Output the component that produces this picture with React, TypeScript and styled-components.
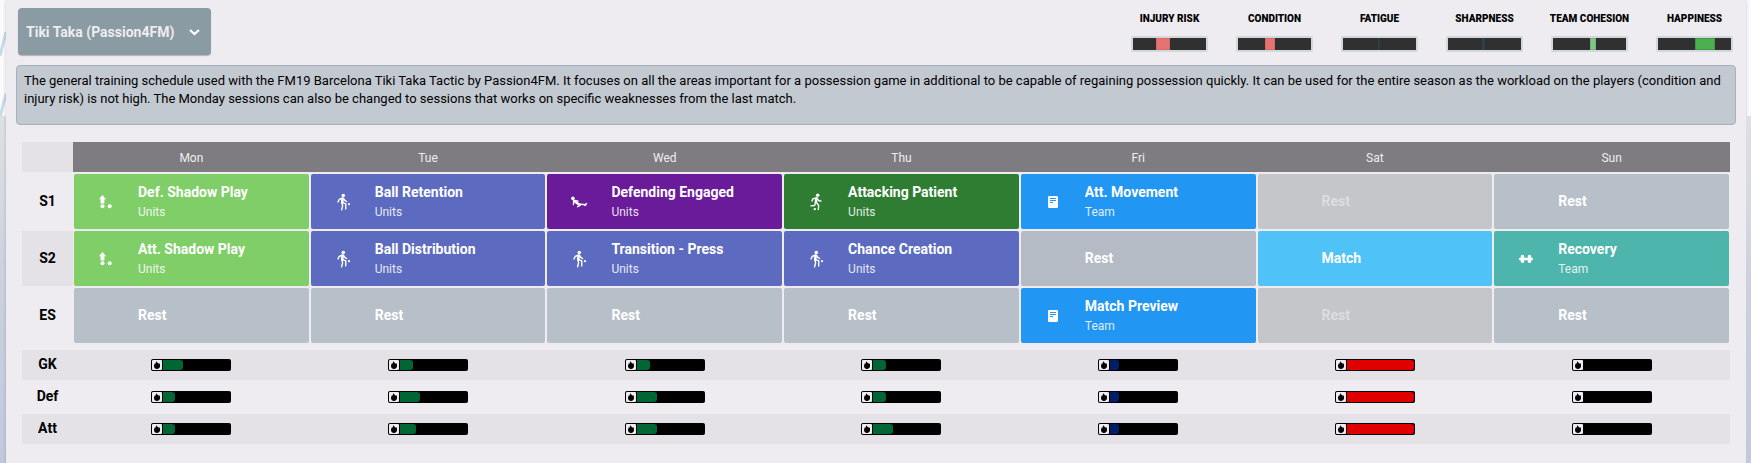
import React from 'react';
import styled, { createGlobalStyle } from 'styled-components';

const GlobalStyle = createGlobalStyle`
  *, *::before, *::after { box-sizing: border-box; }
  body {
    margin: 0;
    background: #fafafb;
    color: #000;
    font-family: Roboto, "Liberation Sans", sans-serif;
    font-size: 14px;
    line-height: 18px;
  }
`;

/* ---------- page shell ---------- */

const Page = styled.div`
  display: grid;
  grid-template-columns: 6px minmax(0, 1fr) 5px;
  min-height: 100vh;
`;

const Edge = styled.div`
  display: flex;
  flex-direction: column;
  overflow: hidden;
`;

const EdgeArt = styled.svg`
  display: block;
  height: 116px;
  flex: none;
`;

const EdgeFade = styled.div`
  flex: 1;
  background: linear-gradient(#dde1e3, #ccd0de 50%, #c1c9db);
`;

const Panel = styled.main`
  background: #eeecf0;
  padding: 8px 10px 17px;
  box-shadow: 0 0 3px rgba(40, 50, 80, 0.25);
`;

/* ---------- toolbar ---------- */

const Toolbar = styled.header`
  display: flex;
  justify-content: space-between;
  align-items: flex-start;
  margin: 0 -3px 10px 2px;
`;

const Picker = styled.div`
  display: grid;
  grid-template-columns: 1fr 24px;
  align-items: center;
  width: 193px;
  height: 47px;
`;

const PickerSelect = styled.select`
  grid-area: 1 / 1 / 2 / 3;
  appearance: none;
  width: 100%;
  height: 100%;
  padding: 0 32px 0 8px;
  border: 0;
  border-radius: 4px;
  background: #8a9ba3;
  color: #eeecf0;
  font: 700 14px/18px Roboto, "Liberation Sans", sans-serif;
  box-shadow: 0 1px 1px rgba(0, 0, 0, 0.25);
`;

const PickerArrow = styled.svg`
  grid-area: 1 / 2;
  width: 14px;
  height: 14px;
  pointer-events: none;
`;

const Meters = styled.div`
  display: flex;
  gap: 16px;
  padding-top: 4px;
`;

const Meter = styled.div`
  display: flex;
  flex-direction: column;
  align-items: center;
  gap: 10px;
  width: 89px;
`;

const MeterLabel = styled.span`
  font-size: 10px;
  font-weight: 900;
  line-height: 14px;
  white-space: nowrap;
`;

const MeterTrack = styled.div`
  display: flex;
  width: 77px;
  height: 16px;
  border: 2px solid #d0d8dc;
  border-radius: 2px;
  background: #303030;
`;

const MeterFill = styled.span<{ $start: number; $size: number; $color: string; $edge: string }>`
  width: ${(p) => p.$size}px;
  margin-left: ${(p) => p.$start}px;
  background: ${(p) => p.$color};
  border: 1px solid ${(p) => p.$edge};
`;

const Description = styled.p`
  min-height: 60px;
  margin: 0 0 15px;
  padding: 6px 7px 4px;
  border: 1px solid #a5b1ba;
  border-radius: 4px;
  background: #c3c9d1;
  font-size: 13px;
`;

/* ---------- schedule ---------- */

const TableWrap = styled.div`
  padding: 0 6px;
`;

const Schedule = styled.table`
  width: 100%;
  table-layout: fixed;
  border-collapse: separate;
  border-spacing: 0 2px;

  tbody + tbody::before {
    content: "";
    display: block;
    height: 3px;
  }
`;

const LabelCol = styled.col`
  width: 51px;
`;

const DayHead = styled.th`
  height: 30px;
  padding: 2px 0 0;
  background: #7e7c80;
  color: #eeecf0;
  font-size: 12px;
  font-weight: 400;
`;

const CornerCell = styled.td`
  padding: 0;
  background: #e4e2e6;
`;

const RowLabel = styled.th<{ $shaded?: boolean }>`
  padding: 0 0 2px;
  background: ${(p) => (p.$shaded ? '#e4e2e6' : 'transparent')};
  font-size: 14px;
  font-weight: 700;
`;

const SessionCell = styled.td`
  padding: 0 1px;
`;

const Tile = styled.div<{ $bg: string; $faded?: boolean }>`
  display: grid;
  grid-template-columns: 64px minmax(0, 1fr);
  align-items: center;
  height: 55px;
  border-radius: 2px;
  background: ${(p) => p.$bg};
  color: ${(p) => (p.$faded ? '#dcdde0' : '#fff')};
`;

const TileIcon = styled.svg`
  display: block;
  width: 18px;
  height: 18px;
  margin-left: 24px;
  fill: none;
  stroke: #fff;
  stroke-width: 1.4;
  stroke-linecap: round;
  stroke-linejoin: round;
`;

const TileText = styled.div`
  grid-column: 2;
`;

const TileTitle = styled.div`
  font-weight: 700;
  padding-bottom: 2px;
  white-space: nowrap;
`;

const TileSub = styled.div`
  font-size: 12px;
  opacity: 0.85;
`;

const LoadCell = styled.td<{ $shaded?: boolean }>`
  height: 30px;
  padding: 0;
  background: ${(p) => (p.$shaded ? '#e4e2e6' : 'transparent')};
`;

const LoadBar = styled.div`
  display: flex;
  gap: 1px;
  width: 80px;
  height: 12px;
  margin: 0 auto;
  padding: 1px;
  border-radius: 2px;
  background: #000;
`;

const LoadIcon = styled.svg`
  flex: none;
  width: 10px;
  height: 10px;
  border-radius: 1px;
  background: #eeecf0;
`;

const LoadFill = styled.span<{ $size: number; $color: string }>`
  width: ${(p) => p.$size}px;
  border-radius: 0 3px 3px 0;
  background: ${(p) => p.$color};
`;

/* ---------- data ---------- */

type IconName = 'shadow' | 'pass' | 'slide' | 'run' | 'notes' | 'weights';

interface Session {
  title: string;
  bg: string;
  sub?: string;
  icon?: IconName;
  faded?: boolean;
}

const GREEN = '#7fce68';
const INDIGO = '#5c6bc0';
const BLUE = '#2196f3';

const units = (title: string, bg: string, icon: IconName): Session => ({ title, bg, icon, sub: 'Units' });
const team = (title: string, bg: string, icon: IconName): Session => ({ title, bg, icon, sub: 'Team' });
const rest: Session = { title: 'Rest', bg: '#b7bfc9' };
const restOff: Session = { title: 'Rest', bg: '#c5c6ca', faded: true };

const days = ['Mon', 'Tue', 'Wed', 'Thu', 'Fri', 'Sat', 'Sun'];

const sessions: { label: string; items: Session[] }[] = [
  {
    label: 'S1',
    items: [
      units('Def. Shadow Play', GREEN, 'shadow'),
      units('Ball Retention', INDIGO, 'pass'),
      units('Defending Engaged', '#6a1b99', 'slide'),
      units('Attacking Patient', '#2e7d32', 'run'),
      team('Att. Movement', BLUE, 'notes'),
      restOff,
      rest,
    ],
  },
  {
    label: 'S2',
    items: [
      units('Att. Shadow Play', GREEN, 'shadow'),
      units('Ball Distribution', INDIGO, 'pass'),
      units('Transition - Press', INDIGO, 'pass'),
      units('Chance Creation', INDIGO, 'pass'),
      { title: 'Rest', bg: '#b4bbc5' },
      { title: 'Match', bg: '#4fc2f8' },
      team('Recovery', '#4db5ac', 'weights'),
    ],
  },
  {
    label: 'ES',
    items: [rest, rest, rest, rest, team('Match Preview', BLUE, 'notes'), restOff, rest],
  },
];

const loads = [
  { label: 'GK', values: [20, 13, 13, 13, 9, 67, 0] },
  { label: 'Def', values: [12, 20, 20, 13, 9, 67, 0] },
  { label: 'Att', values: [12, 16, 20, 20, 9, 67, 0] },
];

const loadColor = (value: number) => (value > 60 ? '#e10000' : value > 10 ? '#006633' : '#001f66');

const meters = [
  { label: 'INJURY RISK', start: 23, size: 14, color: '#e57373', edge: '#d96868' },
  { label: 'CONDITION', start: 27, size: 10, color: '#e57373', edge: '#d96868' },
  { label: 'FATIGUE', start: 35, size: 2, color: '#2b3d47', edge: '#2b3d47' },
  { label: 'SHARPNESS', start: 34, size: 3, color: '#2f444f', edge: '#2b3d47' },
  { label: 'TEAM COHESION', start: 37, size: 6, color: '#81c784', edge: '#6fb573' },
  { label: 'HAPPINESS', start: 37, size: 20, color: '#4caf50', edge: '#409a44' },
];

/* ---------- drawings ---------- */

const Glyph = ({ name }: { name: IconName }) => {
  switch (name) {
    case 'shadow':
      return (
        <g transform="translate(1 2)" fill="#fff" stroke="none">
          <path d="M3.5 0L7 4.2H5.4V8.6H1.6V4.2H0Z" />
          <circle cx="3.5" cy="11.3" r="2" />
          <circle cx="10.7" cy="11.3" r="2" />
        </g>
      );
    case 'pass':
      return (
        <g transform="translate(2 .5)">
          <circle cx="6.3" cy="2" r="1.8" fill="#fff" stroke="none" />
          <path d="M5.6 5L5.2 9.2" strokeWidth="2.6" />
          <path d="M4.6 4.8L2.2 6L1 8.4M6.6 5L7.8 6.8L9.6 8" />
          <path d="M5 9.6L5.6 12.4L4.6 16.2M6.2 9.4L8.8 10.4L8.7 15.4" />
          <circle cx="12" cy="10.7" r="1.1" fill="#fff" stroke="none" />
        </g>
      );
    case 'slide':
      return (
        <g transform="translate(0 3.5)">
          <circle cx="1.9" cy="1.9" r="1.8" fill="#fff" stroke="none" />
          <path d="M3 4.4L6.6 7" strokeWidth="2.4" />
          <path d="M2.8 4.8L2.4 8M4 4L7 4.6" />
          <path d="M7 6.8L10.4 7.8L14 8.2L15.6 7.2M7 7.4L9.4 8.6L6.6 10.2" />
          <circle cx="14.2" cy="8.6" r="1.1" fill="#fff" stroke="none" />
        </g>
      );
    case 'run':
      return (
        <g transform="translate(2 .5)">
          <circle cx="7.7" cy="1.8" r="1.8" fill="#fff" stroke="none" />
          <path d="M6.4 4.8L5.9 8.6" strokeWidth="2.6" />
          <path d="M5.4 4.6L3 5.2L2 7.4M7.2 4.8L8.6 7L11 7.6" />
          <path d="M5.4 9.4L4.6 12L1 12.4M6.6 9.2L8.7 12L8.3 16" />
          <circle cx="4.8" cy="15.6" r="1.2" fill="#fff" stroke="none" />
        </g>
      );
    case 'notes':
      return (
        <g transform="translate(3 3)" strokeLinecap="butt">
          <rect width="10" height="12" rx="1.2" fill="#fff" stroke="none" />
          <path d="M2 2.5H8M2 4.5H8M2 6.5H5" stroke={BLUE} strokeWidth="1" />
        </g>
      );
    case 'weights':
      return (
        <g transform="translate(1 5)" fill="#fff" stroke="none">
          <rect y="2.8" width="14" height="2.4" rx="1" />
          <rect x="1.8" width="3.4" height="8" rx="1.4" />
          <rect x="8.8" width="3.4" height="8" rx="1.4" />
        </g>
      );
  }
};

const Flame = () => (
  <LoadIcon viewBox="0 0 10 10" aria-hidden="true">
    <path d="M4.2 1C4.2 2.2 6 2.4 6.2 3.8L7 3C8 4 8.2 5 8 6.2C7.8 8 6.6 9 5 9C3.4 9 2 8 2 6C2 4.8 2.6 4 3 3L3.6 4C4 3 3.8 2 4.2 1Z" />
  </LoadIcon>
);

/* ---------- view ---------- */

export default function App() {
  return (
    <>
      <GlobalStyle />
      <Page>
        <Edge>
          <EdgeArt viewBox="0 0 6 116" width="6" aria-hidden="true">
            <path d="M6 32L0 56M6 94L0 117" stroke="#c5dbeb" strokeWidth="3" fill="none" />
          </EdgeArt>
          <EdgeFade />
        </Edge>

        <Panel>
          <Toolbar>
            <Picker>
              <PickerSelect aria-label="Training schedule" defaultValue="tiki">
                <option value="tiki">Tiki Taka (Passion4FM)</option>
              </PickerSelect>
              <PickerArrow viewBox="0 0 14 14" aria-hidden="true">
                <path d="M3 5L7.5 9L12 5" fill="none" stroke="#fff" strokeWidth="2.2" />
              </PickerArrow>
            </Picker>
            <Meters>
              {meters.map((m) => (
                <Meter key={m.label}>
                  <MeterLabel>{m.label}</MeterLabel>
                  <MeterTrack role="img" aria-label={m.label}>
                    <MeterFill $start={m.start} $size={m.size} $color={m.color} $edge={m.edge} />
                  </MeterTrack>
                </Meter>
              ))}
            </Meters>
          </Toolbar>

          <Description>
            The general training schedule used with the FM19 Barcelona Tiki Taka Tactic by Passion4FM. It focuses on all
            the areas important for a possession game in additional to be capable of regaining possession quickly. It can
            be used for the entire season as the workload on the players (condition and injury risk) is not high. The
            Monday sessions can also be changed to sessions that works on specific weaknesses from the last match.
          </Description>

          <TableWrap>
            <Schedule>
              <colgroup>
                <LabelCol />
                {days.map((d) => (
                  <col key={d} />
                ))}
              </colgroup>
              <thead>
                <tr>
                  <CornerCell />
                  {days.map((d) => (
                    <DayHead key={d} scope="col">
                      {d}
                    </DayHead>
                  ))}
                </tr>
              </thead>
              <tbody>
                {sessions.map((row, r) => (
                  <tr key={row.label}>
                    <RowLabel scope="row" $shaded={r % 2 === 1}>
                      {row.label}
                    </RowLabel>
                    {row.items.map((s, i) => (
                      <SessionCell key={days[i]}>
                        <Tile $bg={s.bg} $faded={s.faded}>
                          {s.icon && (
                            <TileIcon viewBox="0 0 18 18" aria-hidden="true">
                              <Glyph name={s.icon} />
                            </TileIcon>
                          )}
                          <TileText>
                            <TileTitle>{s.title}</TileTitle>
                            {s.sub && <TileSub>{s.sub}</TileSub>}
                          </TileText>
                        </Tile>
                      </SessionCell>
                    ))}
                  </tr>
                ))}
              </tbody>
              <tbody>
                {loads.map((row, r) => (
                  <tr key={row.label}>
                    <RowLabel scope="row" $shaded={r % 2 === 0}>
                      {row.label}
                    </RowLabel>
                    {row.values.map((v, i) => (
                      <LoadCell key={days[i]} $shaded={r % 2 === 0}>
                        <LoadBar>
                          <Flame />
                          <LoadFill $size={v} $color={loadColor(v)} />
                        </LoadBar>
                      </LoadCell>
                    ))}
                  </tr>
                ))}
              </tbody>
            </Schedule>
          </TableWrap>
        </Panel>

        <Edge>
          <EdgeArt viewBox="0 0 5 116" width="5" aria-hidden="true" />
          <EdgeFade />
        </Edge>
      </Page>
    </>
  );
}
